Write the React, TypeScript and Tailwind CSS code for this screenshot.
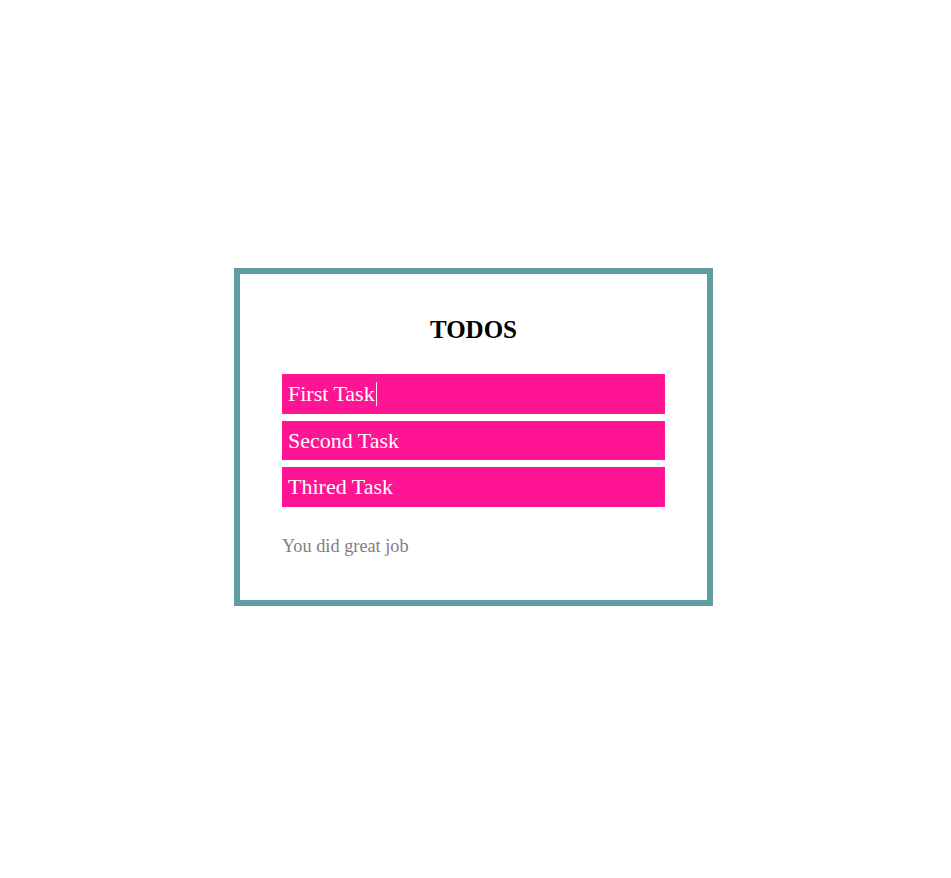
import React from "react";

export default function App() {
  const tasks = ["First Task", "Second Task", "Thired Task"];
  return (
    <div
      className="min-h-screen w-full flex items-center justify-center pr-[4px] pb-[4px] bg-white"
      style={{ fontFamily: '"Liberation Serif", "Times New Roman", serif' }}
    >
      <div className="w-[479px] border-[6px] border-[#5f9ea0] bg-white px-[42px] pt-[42px] pb-[44.5px]">
        <h2 className="text-center text-[25px] font-bold leading-[28px] text-black">TODOS</h2>
        <ul className="mt-[30px] flex flex-col gap-[7px]">
          {tasks.map((t, i) => (
            <li
              key={t}
              className="h-[39.5px] bg-[#ff1493] pl-[6px] text-[22px] leading-[39.5px] text-white"
            >
              {t}
              {i === 0 && (
                <span className="inline-block h-[24px] w-px bg-[#ffe6f3] align-[-5px] ml-[1px]" />
              )}
            </li>
          ))}
        </ul>
        <p className="mt-[29px] text-[18.3px] leading-[20px] text-[#808080]">You did great job</p>
      </div>
    </div>
  );
}
